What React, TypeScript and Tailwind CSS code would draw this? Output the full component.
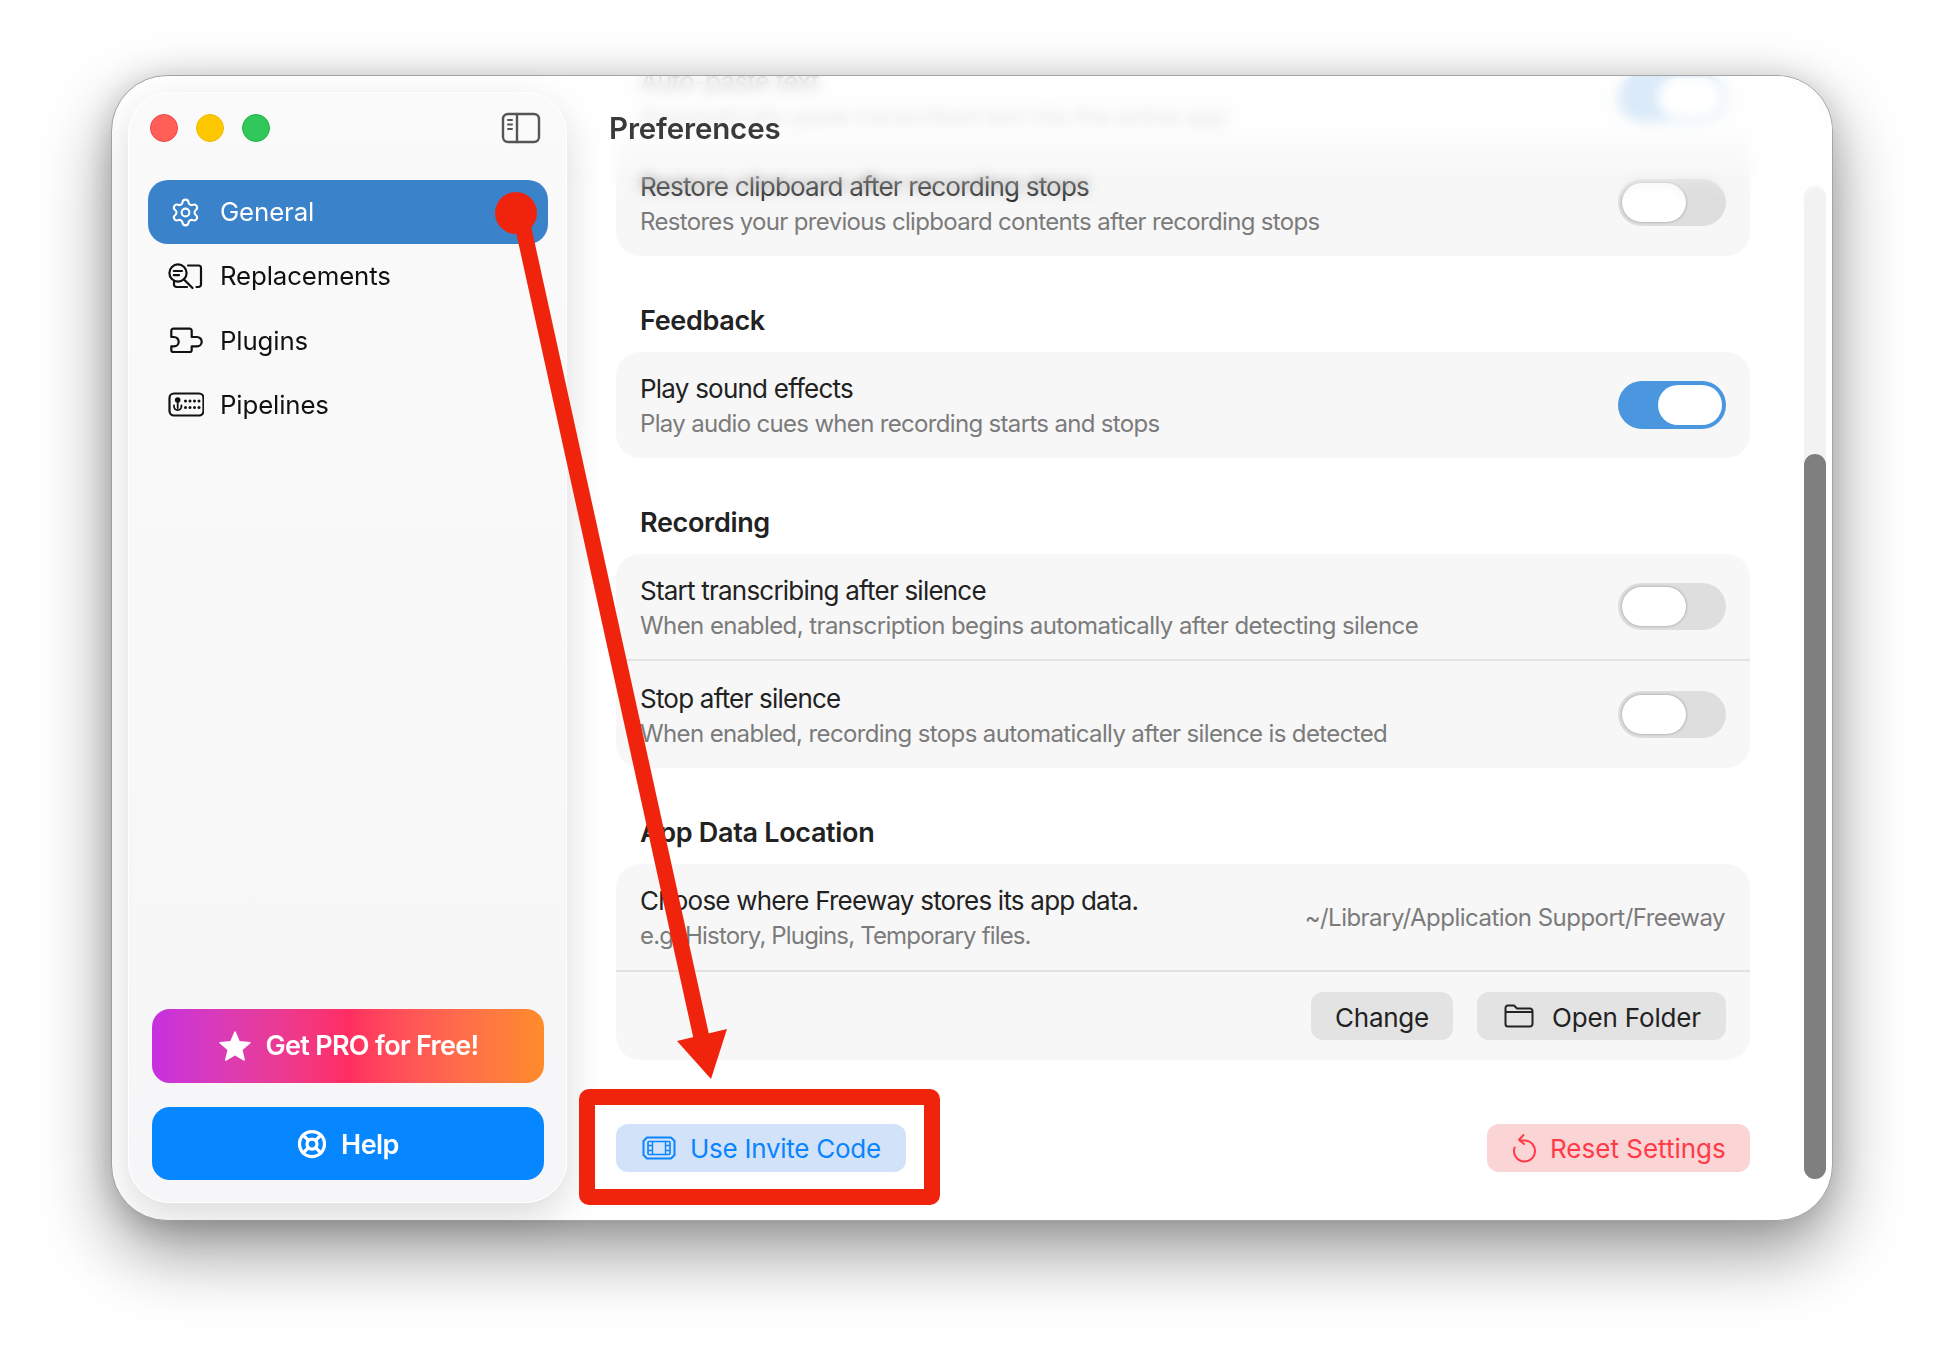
import { LifeBuoy, Settings } from "lucide-react";

function ReplacementsIcon() {
  return (
    <svg width="36" height="30" viewBox="0 0 36 30" fill="none" stroke="#111" strokeWidth="2.2" strokeLinecap="round" strokeLinejoin="round">
      <circle cx="10" cy="12" r="8.6" />
      <path d="M5.8 10H14M5.8 14.2H11M16 18.5L24.5 27" />
      <path d="M20 4.5H30.5A2.5 2.5 0 0 1 33 7V23.5A2.5 2.5 0 0 1 30.5 26H28.5M6 20.5V23.5A2.5 2.5 0 0 0 8.5 26H19" />
    </svg>
  );
}

function PluginsIcon() {
  return (
    <svg width="36" height="30" viewBox="0 0 36 30" fill="none" stroke="#111" strokeWidth="2.2" strokeLinejoin="round">
      <path d="M5.3 2.7H21.7A2 2 0 0 1 23.7 4.7V11H29A4.7 4.7 0 0 1 29 20.4H23.7V24A2 2 0 0 1 21.7 26H5.3A2 2 0 0 1 3.3 24V20.4H6A4.7 4.7 0 0 0 6 11H3.3V4.7A2 2 0 0 1 5.3 2.7Z" />
    </svg>
  );
}

function PipelinesIcon() {
  return (
    <svg width="36" height="30" viewBox="0 0 36 30" fill="none" stroke="#111" strokeWidth="2.2" strokeLinecap="round">
      <rect x="1.5" y="3.5" width="34" height="22" rx="4.5" />
      <circle cx="9.7" cy="10" r="2.8" fill="#111" stroke="none" />
      <path d="M9.7 12V18M6 15.5A3.8 3.8 0 1 0 13.4 15.5" strokeWidth="1.8" />
      <g fill="#111" stroke="none">
        <circle cx="17.5" cy="11" r="1.5" />
        <circle cx="22" cy="11" r="1.5" />
        <circle cx="26.5" cy="11" r="1.5" />
        <circle cx="31" cy="11" r="1.5" />
        <circle cx="17.5" cy="17.5" r="1.5" />
        <circle cx="22" cy="17.5" r="1.5" />
        <circle cx="26.5" cy="17.5" r="1.5" />
        <circle cx="31" cy="17.5" r="1.5" />
      </g>
    </svg>
  );
}

function SidebarToggleIcon() {
  return (
    <svg width="40" height="32" viewBox="0 0 40 32" fill="none" stroke="#555" strokeWidth="2.4" strokeLinecap="round">
      <rect x="2" y="2" width="36" height="28" rx="5" />
      <path d="M16 2V30" />
      <path d="M7 8H11M7 12.5H11M7 17H11" strokeWidth="2" />
    </svg>
  );
}

function InviteIcon() {
  return (
    <svg width="34" height="24" viewBox="0 0 34 24" fill="none" stroke="#0a84ff" strokeWidth="2" strokeLinejoin="round">
      <path d="M5 1.5H29L32.5 5V8.5V15.5V19L29 22.5H5L1.5 19V5Z" />
      <rect x="6" y="5.5" width="22" height="13" rx="1" strokeWidth="1.6" />
      <path d="M10.5 5.5V18.5M23.5 5.5V18.5M6 9.5H10.5M6 14.5H10.5M23.5 9.5H28M23.5 14.5H28" strokeWidth="1.4" />
    </svg>
  );
}

function FolderIcon() {
  return (
    <svg width="30" height="24" viewBox="0 0 30 24" fill="none" stroke="#222" strokeWidth="2" strokeLinejoin="round">
      <path d="M1.5 4A2.5 2.5 0 0 1 4 1.5H10L13 4.5H26A2.5 2.5 0 0 1 28.5 7V20A2.5 2.5 0 0 1 26 22.5H4A2.5 2.5 0 0 1 1.5 20Z" />
      <path d="M1.5 8H28.5" />
    </svg>
  );
}

function ResetIcon() {
  return (
    <svg width="26" height="30" viewBox="0 0 26 30" fill="none" stroke="#ff3b47" strokeWidth="2" strokeLinecap="round" strokeLinejoin="round">
      <path d="M9 7.5H13.5A10.5 10.5 0 1 1 3.6 14.5" />
      <path d="M12.5 2L8 6.8L13 11" />
    </svg>
  );
}

function Toggle({ on }: { on?: boolean }) {
  return (
    <div className={on ? "w-[108px] h-[48px] rounded-full bg-[#4a97e0] flex items-center justify-end pr-[4px]" : "w-[108px] h-[47px] rounded-full bg-[#dedede] flex items-center pl-[4px]"}>
      <div className={on ? "w-[64px] h-[40px] rounded-full bg-white" : "w-[64px] h-[39px] rounded-full bg-white shadow-[0_0_3px_rgba(0,0,0,0.35)]"} />
    </div>
  );
}

function SettingRow({ title, sub, on, className, subClass }: { title: string; sub: string; on?: boolean; className: string; subClass?: string }) {
  return (
    <div className={"flex items-center justify-between pl-[24px] pr-[24px] " + className}>
      <div className="pt-[2px]">
        <div className="text-[26px] leading-[35px] text-[#222222] tracking-[-0.03em]">{title}</div>
        <div className={"text-[24px] leading-[35px] text-[#7b7b7b] " + (subClass ?? "tracking-[-0.028em]")}>{sub}</div>
      </div>
      <Toggle on={on} />
    </div>
  );
}

function SectionTitle({ children }: { children: string }) {
  return <h3 className="mt-[47px] mb-[16px] pl-[24px] h-[33px] text-[27px] leading-[35px] font-semibold text-[#222222] tracking-[-0.012em]">{children}</h3>;
}

function NavItem({ icon, label, className }: { icon: React.ReactNode; label: string; className?: string }) {
  return (
    <div className={"h-[64px] flex items-center text-[25.8px] text-[#111111] tracking-[-0.005em] rounded-[20px] " + (className ?? "")}>
      <div className="w-[72px] pl-[20px] flex items-center">{icon}</div>
      <span className="pt-[1px]">{label}</span>
    </div>
  );
}

export default function App() {
  return (
    <div className="relative w-[1944px] h-[1368px] overflow-hidden bg-white pl-[111px] pt-[75px] font-['Inter','Noto_Sans',sans-serif]">
      <div className="w-[1722px] h-[1146px] rounded-[56px] bg-white border border-[#a5a5a5] shadow-[0_30px_70px_rgba(0,0,0,0.42),0_0_30px_rgba(0,0,0,0.12)] flex">
        <aside className="relative z-10 ml-[16px] mt-[16px] w-[439px] h-[1111px] shrink-0 rounded-[42px] border border-white bg-gradient-to-b from-[#fafafa] to-[#f6f6f8] shadow-[0_14px_40px_rgba(0,0,0,0.15)] flex flex-col">
          <div className="h-[70px] mb-[17px] flex items-center justify-between pl-[21px] pr-[25px]">
            <div className="flex gap-[18px]">
              <div className="w-[28px] h-[28px] rounded-full bg-[#ff5f57] border border-[#f0404a]" />
              <div className="w-[28px] h-[28px] rounded-full bg-[#fdc700] border border-[#f0bb00]" />
              <div className="w-[28px] h-[28px] rounded-full bg-[#32c759] border border-[#1fb53f]" />
            </div>
            <SidebarToggleIcon />
          </div>
          <nav className="pl-[19px] pr-[18px] flex flex-col gap-[0.33px]">
            <NavItem icon={<Settings size={31} strokeWidth={1.6} color="#ffffff" className="ml-[2px]" />} label="General" className="bg-[#3a82c9] text-white" />
            <NavItem icon={<ReplacementsIcon />} label="Replacements" />
            <NavItem icon={<PluginsIcon />} label="Plugins" />
            <NavItem icon={<PipelinesIcon />} label="Pipelines" />
          </nav>
          <div className="mt-auto pl-[23px] pr-[22px] pb-[22px] flex flex-col gap-[24px]">
            <button className="h-[74px] rounded-[18px] bg-gradient-to-r from-[#c72fe0] via-[#ff2d62] to-[#ff8c2a] flex items-center justify-center gap-[14px] text-white text-[27px] font-semibold tracking-[-0.026em]">
              <svg width="34" height="32" viewBox="0 0 34 32" fill="#ffffff" stroke="#ffffff" strokeWidth="1.5" strokeLinejoin="round">
                <path d="M17 2L21.2 11.8L32 12.8L23.8 19.8L26.2 30L17 24.6L7.8 30L10.2 19.8L2 12.8L12.8 11.8Z" />
              </svg>
              <span className="pt-[1px]">Get PRO for Free!</span>
            </button>
            <button className="h-[73px] rounded-[18px] bg-[#0787ff] flex items-center justify-center gap-[14px] pt-[1px] text-white text-[27px] font-semibold tracking-[-0.02em]">
              <LifeBuoy size={30} strokeWidth={2.6} />
              <span className="pt-[2px]">Help</span>
            </button>
          </div>
        </aside>

        <main className="relative flex-1 flex overflow-hidden rounded-r-[56px]">
          <div className="ml-[49px] w-[1134px] -mt-[32px] shrink-0">
            <div className="rounded-[24px] bg-[#f7f7f7]">
              <SettingRow className="h-[107px]" title="Auto-paste text" sub="Automatically paste transcribed text into the active app" on />
              <SettingRow className="h-[105px] pb-[2px]" title="Restore clipboard after recording stops" sub="Restores your previous clipboard contents after recording stops" />
            </div>

            <SectionTitle>Feedback</SectionTitle>
            <div className="rounded-[24px] bg-[#f7f7f7]">
              <SettingRow className="h-[106px]" title="Play sound effects" sub="Play audio cues when recording starts and stops" on />
            </div>

            <SectionTitle>Recording</SectionTitle>
            <div className="rounded-[24px] bg-[#f7f7f7]">
              <SettingRow className="h-[107px] border-b-2 border-[#e2e2e2]" subClass="tracking-[-0.024em]" title="Start transcribing after silence" sub="When enabled, transcription begins automatically after detecting silence" />
              <SettingRow className="h-[107px]" subClass="tracking-[-0.026em]" title="Stop after silence" sub="When enabled, recording stops automatically after silence is detected" />
            </div>

            <SectionTitle>App Data Location</SectionTitle>
            <div className="rounded-[24px] bg-[#f7f7f7]">
              <div className="h-[108px] flex items-center justify-between pl-[24px] pr-[25px] border-b-2 border-[#e2e2e2]">
                <div className="pt-[2px]">
                  <div className="text-[26px] leading-[35px] text-[#222222] tracking-[-0.03em]">Choose where Freeway stores its app data.</div>
                  <div className="text-[24px] leading-[35px] text-[#7b7b7b] tracking-[-0.035em]">e.g. History, Plugins, Temporary files.</div>
                </div>
                <div className="pt-[2px] text-[24px] text-[#7b7b7b] tracking-[-0.022em]">~/Library/Application Support/Freeway</div>
              </div>
              <div className="h-[88px] flex items-center justify-end gap-[24px] pr-[24px]">
                <button className="w-[142px] h-[48px] pt-[2px] rounded-[12px] bg-[#e3e3e3] text-[26px] text-[#222222] tracking-[-0.01em]">Change</button>
                <button className="w-[249px] h-[48px] rounded-[12px] bg-[#e3e3e3] text-[26px] text-[#222222] tracking-[-0.006em] flex items-center pl-[27px] gap-[18px]">
                  <FolderIcon />
                  <span className="pt-[2px]">Open Folder</span>
                </button>
              </div>
            </div>

            <div className="mt-[64px] flex items-center justify-between">
              <button className="w-[290px] h-[48px] rounded-[12px] bg-[#d2e3f9] text-[26px] text-[#0a84ff] tracking-[-0.01em] flex items-center pl-[26px] gap-[14px]">
                <InviteIcon />
                Use Invite Code
              </button>
              <button className="w-[263px] h-[48px] rounded-[12px] bg-[#fbd5d6] text-[26px] text-[#ff3b47] flex items-center pl-[24px] gap-[13px]">
                <ResetIcon />
                Reset Settings
              </button>
            </div>
          </div>

          <div className="ml-[54px] mr-[6px] mt-[110px] w-[22px] h-[993px] rounded-full bg-[#f2f2f2] flex flex-col justify-end">
            <div className="h-[725px] rounded-full bg-[#7f7f7f]" />
          </div>

          <div className="absolute inset-x-0 top-0 h-[130px] backdrop-blur-[6px] [mask-image:linear-gradient(to_bottom,black_62%,transparent)]" />
          <div className="absolute inset-x-0 top-0 h-[105px] bg-gradient-to-b from-white/80 via-white/80 to-white/0" />
          <div className="absolute left-[42px] top-[33px] text-[29.5px] leading-[38px] font-semibold text-[#3a3a3a] tracking-[-0.005em]">Preferences</div>
        </main>
      </div>

      <svg className="absolute left-0 top-0 z-20 pointer-events-none" width="1944" height="1368" viewBox="0 0 1944 1368" fill="none">
        <circle cx="516" cy="213" r="21" fill="#f0240c" />
        <path d="M520 213L702 1040" stroke="#f0240c" strokeWidth="16" />
        <path d="M677 1041L727 1029L711 1079Z" fill="#f0240c" />
        <rect x="587" y="1097" width="345" height="100" rx="2" stroke="#f0240c" strokeWidth="16" />
      </svg>
    </div>
  );
}
